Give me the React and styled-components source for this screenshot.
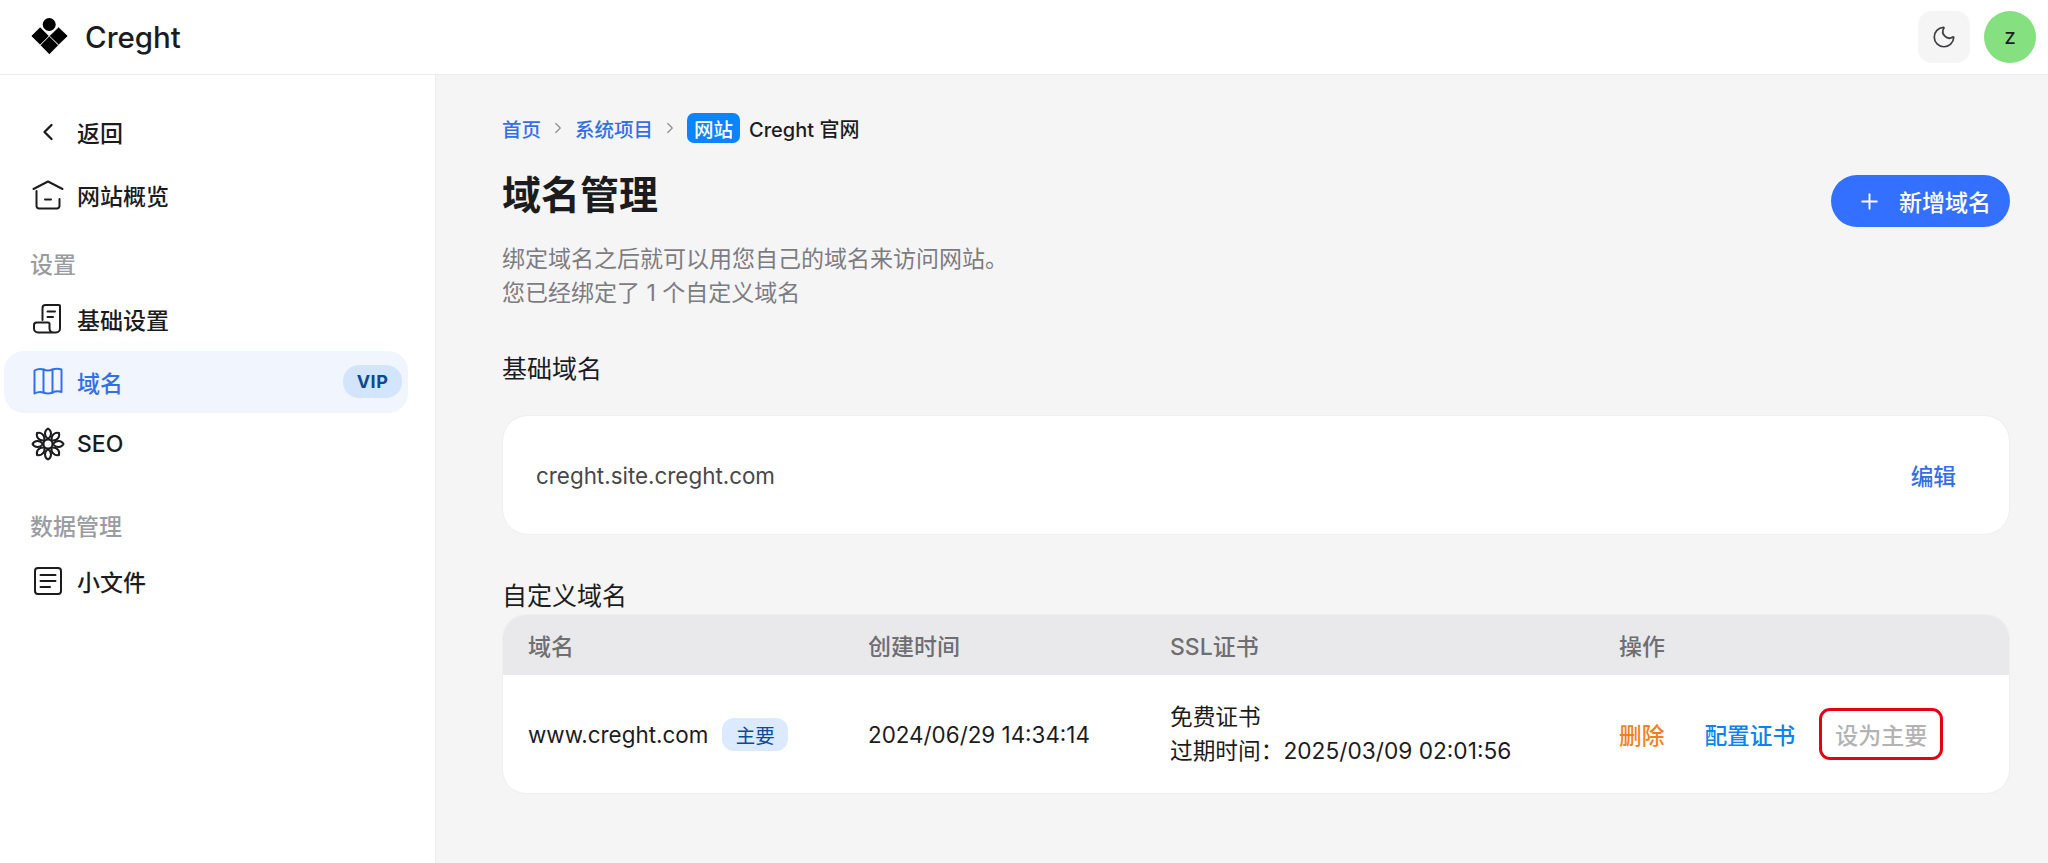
import React from "react";
import styled, { createGlobalStyle } from "styled-components";
import { ChevronLeft, ChevronRight, Moon, Plus } from "lucide-react";

const GlobalStyle = createGlobalStyle`
    html, body {
        margin: 0;
        padding: 0;
        background: #f5f5f6;
    }
    body {
        font-family: Inter, "Noto Sans CJK SC", sans-serif;
        color: #1c1c1e;
        -webkit-font-smoothing: antialiased;
    }
    * {
        box-sizing: border-box;
    }
`;

const Page = styled.div`
    width: 2048px;
    height: 863px;
    overflow: hidden;
    display: flex;
    flex-direction: column;
`;

const Header = styled.header`
    height: 75px;
    flex: none;
    background: #fff;
    border-bottom: 1px solid #ececee;
    display: flex;
    align-items: center;
    justify-content: space-between;
    padding: 0 12px 1px 31px;
`;

const Brand = styled.div`
    display: flex;
    align-items: center;
    gap: 17px;
    font-size: 29.5px;
    font-weight: 500;
    color: #1c1c1e;
`;

const HeaderActions = styled.div`
    display: flex;
    align-items: center;
    gap: 14px;
`;

const ThemeButton = styled.div`
    width: 52px;
    height: 52px;
    border-radius: 14px;
    background: #f5f5f5;
    display: flex;
    align-items: center;
    justify-content: center;
    color: #3f3f46;
`;

const Avatar = styled.div`
    width: 52px;
    height: 52px;
    border-radius: 50%;
    background: #85e080;
    display: flex;
    align-items: center;
    justify-content: center;
    font-size: 21px;
    color: #1c1c1e;
`;

const Body = styled.div`
    flex: 1;
    display: flex;
    min-height: 0;
`;

const Sidebar = styled.aside`
    width: 436px;
    flex: none;
    background: #fff;
    border-right: 1px solid #ececee;
    padding: 26px 27px 0 4px;
`;

const NavItem = styled.div`
    height: 62.5px;
    display: flex;
    align-items: center;
    gap: 12px;
    padding: 0 6px 0 26px;
    border-radius: 20px;
    font-size: 23px;
    font-weight: 500;
    color: ${props => (props.$active ? "#3370e8" : "#1c1c1e")};
    background: ${props => (props.$active ? "#f0f5fe" : "transparent")};
`;

const NavIcon = styled.span`
    width: 35px;
    height: 34px;
    flex: none;
    display: flex;
    align-items: center;
    justify-content: center;
`;

const NavLabel = styled.span`
    flex: 1;
`;

const VipBadge = styled.span`
    width: 59px;
    height: 33px;
    border-radius: 16px;
    background: #d3e5fd;
    color: #0b4a97;
    font-size: 18px;
    font-weight: 700;
    letter-spacing: 0.5px;
    display: flex;
    align-items: center;
    justify-content: center;
`;

const NavSection = styled.div`
    height: 30px;
    margin: ${props => props.$top}px 0 8px 26px;
    font-size: 23px;
    line-height: 30px;
    font-weight: 500;
    color: #9a9ca3;
`;

const Main = styled.main`
    flex: 1;
    min-width: 0;
    padding: 37px 38px 0 66px;
`;

const Breadcrumb = styled.nav`
    height: 32px;
    display: flex;
    align-items: center;
    font-size: 19.5px;
    font-weight: 500;
    color: #3370e8;
`;

const CrumbSeparator = styled.span`
    width: 34px;
    flex: none;
    display: flex;
    justify-content: center;
    color: #8e8e93;
`;

const CrumbTag = styled.span`
    height: 30px;
    padding: 0 7px;
    border-radius: 7px;
    background: #0a84ff;
    color: #fff;
    display: flex;
    align-items: center;
    margin-right: 9px;
`;

const CrumbCurrent = styled.span`
    font-size: 20px;
    color: #1c1c1e;
`;

const TitleRow = styled.div`
    display: flex;
    justify-content: space-between;
    align-items: flex-start;
    margin-top: 25px;
`;

const Title = styled.h1`
    margin: 0;
    height: 52px;
    font-size: 39px;
    line-height: 52px;
    font-weight: 700;
    color: #1c1c1e;
`;

const PrimaryButton = styled.button`
    width: 179px;
    height: 52px;
    margin-top: 6px;
    border: 0;
    border-radius: 26px;
    background: #3370ff;
    color: #fff;
    font: inherit;
    font-size: 23px;
    font-weight: 500;
    display: flex;
    align-items: center;
    gap: 17px;
    padding: 0 0 0 26px;
`;

const Description = styled.p`
    margin: 15px 0 0;
    font-size: 23px;
    line-height: 34px;
    color: #7c7c82;
`;

const SectionTitle = styled.h2`
    margin: ${props => props.$top}px 0 0;
    height: 34px;
    font-size: 25px;
    line-height: 34px;
    font-weight: 400;
    color: #1c1c1e;
`;

const DomainCard = styled.div`
    height: 120px;
    margin-top: 29px;
    background: #fff;
    border: 1px solid #efeff1;
    border-radius: 26px;
    display: flex;
    align-items: center;
    justify-content: space-between;
    padding: 0 53px 0 33px;
    font-size: 22.4px;
    color: #48484a;
`;

const TextAction = styled.span`
    font-size: 22.7px;
    font-weight: 500;
    color: ${props => props.$color};
`;

const Table = styled.div`
    margin-top: 1px;
    border-radius: 24px;
    overflow: hidden;
    background: #fff;
    border: 1px solid #efeff1;
`;

const Columns = styled.div`
    display: grid;
    grid-template-columns: 340px 302px 449px 1fr;
    padding-left: 25px;
    align-items: center;
`;

const TableHead = styled(Columns)`
    height: 60px;
    background: #e9e9eb;
    font-size: 23px;
    font-weight: 500;
    color: #6e6e73;
`;

const TableRow = styled(Columns)`
    height: 118px;
    font-size: 22.4px;
    color: #1c1c1e;
`;

const DomainCell = styled.div`
    display: flex;
    align-items: center;
    gap: 14px;
`;

const MainBadge = styled.span`
    width: 66px;
    height: 33px;
    border-radius: 12px;
    background: #dbeafe;
    color: #0b4a97;
    font-size: 19.5px;
    display: flex;
    align-items: center;
    justify-content: center;
`;

const CertCell = styled.div`
    font-size: 22.7px;
    line-height: 34px;
`;

const ActionCell = styled.div`
    display: flex;
    align-items: center;
    gap: 40px;
`;

const MarkedButton = styled.span`
    width: 124px;
    height: 52px;
    margin-left: -16px;
    border: 3px solid #e60012;
    border-radius: 11px;
    font-size: 23px;
    color: #b3b3b3;
    font-weight: 500;
    display: flex;
    align-items: center;
    justify-content: center;
`;

const LogoMark = () => (
    <svg width="37" height="37" viewBox="0 0 37 37" fill="#000" stroke="#fff" strokeWidth="0.7">
        <circle cx="18.2" cy="6.5" r="6.5" stroke="none" />
        <path d="M9.2 9 L18.2 18 L9.2 27 L0 18 Z" />
        <path d="M27.6 9 L37 18 L27.6 27 L18.2 18 Z" />
        <path d="M18.3 18 L27.5 27.2 L18.3 36.6 L9.2 27.2 Z" />
    </svg>
);

const HouseIcon = () => (
    <svg width="32" height="30" viewBox="0 0 32 30" fill="none" stroke="currentColor" strokeWidth="2" strokeLinecap="round" strokeLinejoin="round">
        <path d="M1.5 9 L16 1.5 L30.5 9" />
        <path d="M4.5 11 V26 a2.5 2.5 0 0 0 2.5 2.5 H25 a2.5 2.5 0 0 0 2.5 -2.5 V19" />
        <path d="M13 19.5 H19" />
    </svg>
);

const ScrollIcon = () => (
    <svg width="29" height="30" viewBox="0 0 29 30" fill="none" stroke="currentColor" strokeWidth="2" strokeLinecap="round" strokeLinejoin="round">
        <path d="M9.5 16 V4 a3 3 0 0 1 3 -3 H26 a1 1 0 0 1 1 1 V24.5 a4 4 0 0 1 -4 4 H5 a4 4 0 0 1 -4 -4 V21 a2.5 2.5 0 0 1 2.5 -2.5 H15 a1.5 1.5 0 0 1 1.5 1.5 V24.5 a4 4 0 0 0 4 4" />
        <path d="M14.5 7.5 H22" />
        <path d="M14.5 13 H20" />
    </svg>
);

const MapIcon = () => (
    <svg width="30" height="29" viewBox="0 0 30 29" fill="none" stroke="currentColor" strokeWidth="2" strokeLinecap="round" strokeLinejoin="round">
        <path d="M1.5 3.5 Q6 1 10.5 2.5 Q15 4.5 19.5 2.5 Q24 1 28.5 2.5 V25 Q24 23.5 19.5 25.5 Q15 27.5 10.5 25.5 Q6 24 1.5 26.5 Z" />
        <path d="M10.5 2.5 V25.5" />
        <path d="M19.5 2.5 V25.5" />
    </svg>
);

const FlowerIcon = () => (
    <svg width="34" height="34" viewBox="0 0 34 34" fill="none" stroke="currentColor" strokeWidth="2">
        {[0, 45, 90, 135, 180, 225, 270, 315].map(angle => (
            <path key={angle} d="M17 12 C12.5 8.5 13.5 3.5 17 1.5 C20.5 3.5 21.5 8.5 17 12 Z" transform={`rotate(${angle} 17 17)`} strokeLinejoin="round" />
        ))}
        <circle cx="17" cy="17" r="4.5" />
    </svg>
);

const NoteIcon = () => (
    <svg width="30" height="30" viewBox="0 0 30 30" fill="none" stroke="currentColor" strokeWidth="2" strokeLinecap="round" strokeLinejoin="round">
        <rect x="2" y="2" width="26" height="26" rx="3" />
        <path d="M7.5 9 H22.5" />
        <path d="M7.5 15 H22.5" />
        <path d="M7.5 21 H17" />
    </svg>
);

const App = () => {
    return (
        <Page>
            <GlobalStyle />
            <Header>
                <Brand>
                    <LogoMark />
                    Creght
                </Brand>
                <HeaderActions>
                    <ThemeButton>
                        <Moon size={26} strokeWidth={1.6} />
                    </ThemeButton>
                    <Avatar>z</Avatar>
                </HeaderActions>
            </Header>
            <Body>
                <Sidebar>
                    <NavItem>
                        <NavIcon><ChevronLeft size={28} strokeWidth={2} /></NavIcon>
                        <NavLabel>返回</NavLabel>
                    </NavItem>
                    <NavItem>
                        <NavIcon><HouseIcon /></NavIcon>
                        <NavLabel>网站概览</NavLabel>
                    </NavItem>
                    <NavSection $top={24}>设置</NavSection>
                    <NavItem>
                        <NavIcon><ScrollIcon /></NavIcon>
                        <NavLabel>基础设置</NavLabel>
                    </NavItem>
                    <NavItem $active>
                        <NavIcon><MapIcon /></NavIcon>
                        <NavLabel>域名</NavLabel>
                        <VipBadge>VIP</VipBadge>
                    </NavItem>
                    <NavItem>
                        <NavIcon><FlowerIcon /></NavIcon>
                        <NavLabel>SEO</NavLabel>
                    </NavItem>
                    <NavSection $top={36}>数据管理</NavSection>
                    <NavItem>
                        <NavIcon><NoteIcon /></NavIcon>
                        <NavLabel>小文件</NavLabel>
                    </NavItem>
                </Sidebar>
                <Main>
                    <Breadcrumb>
                        首页
                        <CrumbSeparator><ChevronRight size={18} strokeWidth={1.6} /></CrumbSeparator>
                        系统项目
                        <CrumbSeparator><ChevronRight size={18} strokeWidth={1.6} /></CrumbSeparator>
                        <CrumbTag>网站</CrumbTag>
                        <CrumbCurrent>Creght 官网</CrumbCurrent>
                    </Breadcrumb>
                    <TitleRow>
                        <Title>域名管理</Title>
                        <PrimaryButton>
                            <Plus size={25} strokeWidth={1.8} />
                            新增域名
                        </PrimaryButton>
                    </TitleRow>
                    <Description>
                        绑定域名之后就可以用您自己的域名来访问网站。
                        <br />
                        您已经绑定了 1 个自定义域名
                    </Description>
                    <SectionTitle $top={42}>基础域名</SectionTitle>
                    <DomainCard>
                        creght.site.creght.com
                        <TextAction $color="#3370e8">编辑</TextAction>
                    </DomainCard>
                    <SectionTitle $top={44}>自定义域名</SectionTitle>
                    <Table>
                        <TableHead>
                            <span>域名</span>
                            <span>创建时间</span>
                            <span>SSL证书</span>
                            <span>操作</span>
                        </TableHead>
                        <TableRow>
                            <DomainCell>
                                www.creght.com
                                <MainBadge>主要</MainBadge>
                            </DomainCell>
                            <span>2024/06/29 14:34:14</span>
                            <CertCell>
                                免费证书
                                <br />
                                过期时间：2025/03/09 02:01:56
                            </CertCell>
                            <ActionCell>
                                <TextAction $color="#f77f1b">删除</TextAction>
                                <TextAction $color="#0a84ef">配置证书</TextAction>
                                <MarkedButton>设为主要</MarkedButton>
                            </ActionCell>
                        </TableRow>
                    </Table>
                </Main>
            </Body>
        </Page>
    );
};

export default App;
